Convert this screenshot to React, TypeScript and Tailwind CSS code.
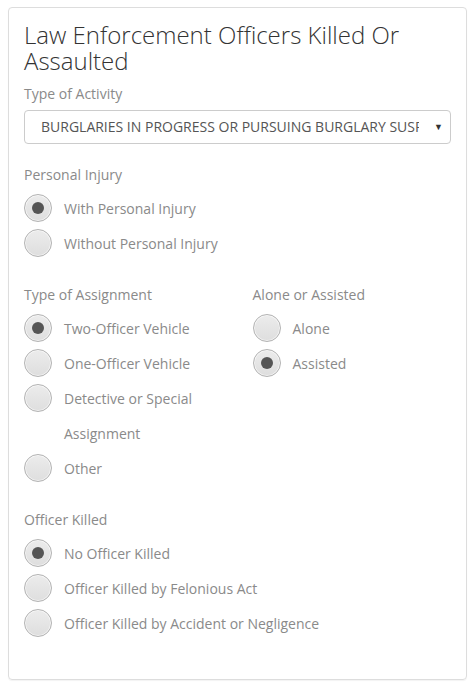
import React from "react";

const font = { fontFamily: '"Open Sans", "Liberation Sans", sans-serif' };

function Radio({ label, checked }: { label: string; checked?: boolean }) {
  return (
    <div className="flex items-start gap-[12px]">
      <div className="h-[35px] flex items-center shrink-0">
        <div className="w-[28px] h-[28px] rounded-full border border-[#b3b3b3] bg-gradient-to-b from-[#ececec] to-[#dedede] shadow-[inset_0_0_0_1px_rgba(255,255,255,0.6)] flex items-center justify-center">
          {checked && <div className="w-[12px] h-[12px] rounded-full bg-[#555555]" />}
        </div>
      </div>
      <div className="text-[14px] leading-[35px] text-[#8a8a8a]">{label}</div>
    </div>
  );
}

function Label({ children }: { children: React.ReactNode }) {
  return <div className="text-[14px] leading-[20px] text-[#8a8a8a]">{children}</div>;
}

export default function App() {
  return (
    <div className="w-[475px] h-[689px] bg-white pt-[7px] px-[8px]" style={font}>
      <div className="h-[673px] border border-[#dddddd] rounded-[4px] shadow-[0_1px_1px_rgba(0,0,0,0.05)] pt-[14px] px-[15px]">
        <h3 className="text-[24px] leading-[26.4px] font-light text-[#333333]">
          Law Enforcement Officers Killed Or Assaulted
        </h3>
        <div className="mt-[9px]">
          <Label>Type of Activity</Label>
        </div>
        <div className="mt-[6px] h-[34px] border border-[#cccccc] rounded-[4px] flex items-center justify-between pr-[7px]">
          <div className="ml-[16px] w-[378px] overflow-hidden whitespace-nowrap text-[14px] text-[#555555]">
            BURGLARIES IN PROGRESS OR PURSUING BURGLARY SUSPECTS
          </div>
          <div className="text-[9px] leading-[12px] text-[#333333]">▼</div>
        </div>

        <div className="mt-[21px]">
          <Label>Personal Injury</Label>
          <div className="mt-[6px]">
            <Radio label="With Personal Injury" checked />
            <Radio label="Without Personal Injury" />
          </div>
        </div>

        <div className="mt-[24px] grid grid-cols-2 gap-x-[30px]">
          <div>
            <Label>Type of Assignment</Label>
            <div className="mt-[6px]">
              <Radio label="Two-Officer Vehicle" checked />
              <Radio label="One-Officer Vehicle" />
              <Radio label="Detective or Special Assignment" />
              <Radio label="Other" />
            </div>
          </div>
          <div>
            <Label>Alone or Assisted</Label>
            <div className="mt-[6px]">
              <Radio label="Alone" />
              <Radio label="Assisted" checked />
            </div>
          </div>
        </div>

        <div className="mt-[24px]">
          <Label>Officer Killed</Label>
          <div className="mt-[6px]">
            <Radio label="No Officer Killed" checked />
            <Radio label="Officer Killed by Felonious Act" />
            <Radio label="Officer Killed by Accident or Negligence" />
          </div>
        </div>
      </div>
    </div>
  );
}
